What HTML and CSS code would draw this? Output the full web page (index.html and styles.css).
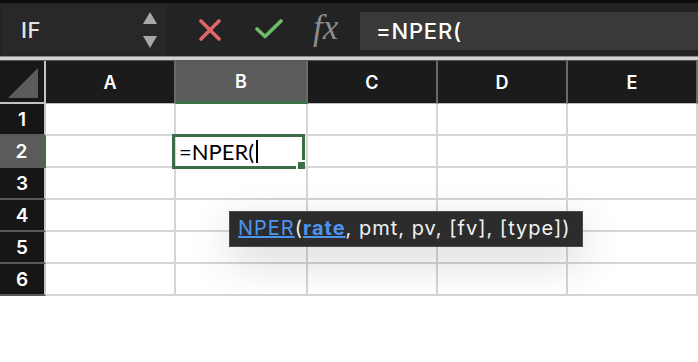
FILE: index.html
```html
<!DOCTYPE html>
<html lang="en">
<head>
  <meta charset="UTF-8">
  <title>NPER</title>
  <link rel="stylesheet" href="styles.css">
</head>
<body>
  <div class="toolbar">
    <div class="namebox">
      <span class="name">IF</span>
      <div class="spin">
        <svg width="14" height="12" viewBox="0 0 14 12"><polygon points="7,0 14,12 0,12" fill="#a9a9a9"/></svg>
        <svg width="14" height="12" viewBox="0 0 14 12"><polygon points="0,0 14,0 7,12" fill="#a9a9a9"/></svg>
      </div>
    </div>
    <div class="actions">
      <svg class="cancel" width="22" height="22" viewBox="0 0 22 22"><path d="M2 2 L20 20 M20 2 L2 20" stroke="#e06767" stroke-width="3.6" stroke-linecap="round"/></svg>
      <svg class="enter" width="28" height="20" viewBox="0 0 28 20"><path d="M2 10 L10 17.5 L26 2" fill="none" stroke="#6bbb69" stroke-width="3.6" stroke-linecap="round" stroke-linejoin="round"/></svg>
      <span class="fx">fx</span>
    </div>
    <div class="formula">=NPER(</div>
  </div>
  <div class="divider"></div>

  <div class="sheet">
    <div class="corner"><svg width="30" height="30" viewBox="0 0 30 30"><polygon points="30,0 30,30 0,30" fill="#5c5c5c"/></svg></div>
    <div class="colhead">A</div>
    <div class="colhead active">B</div>
    <div class="colhead">C</div>
    <div class="colhead">D</div>
    <div class="colhead">E</div>

    <div class="rowhead">1</div>
    <div class="cell"></div><div class="cell"></div><div class="cell"></div><div class="cell"></div><div class="cell"></div>

    <div class="rowhead active">2</div>
    <div class="cell"></div>
    <div class="cell editing">=NPER(<span class="caret"></span><div class="sel"><div class="handle"></div></div></div>
    <div class="cell"></div><div class="cell"></div><div class="cell"></div>

    <div class="rowhead">3</div>
    <div class="cell"></div><div class="cell"></div><div class="cell"></div><div class="cell"></div><div class="cell"></div>

    <div class="rowhead">4</div>
    <div class="cell"></div><div class="cell"></div><div class="cell"></div><div class="cell"></div><div class="cell"></div>

    <div class="rowhead">5</div>
    <div class="cell"></div><div class="cell"></div><div class="cell"></div><div class="cell"></div><div class="cell"></div>

    <div class="rowhead">6</div>
    <div class="cell"></div><div class="cell"></div><div class="cell"></div><div class="cell"></div><div class="cell"></div>

    <div class="tip"><span class="fn">NPER</span>(<span class="arg">rate</span>, pmt, pv, [fv], [type])</div>
  </div>
</body>
</html>
```

FILE: styles.css
```css
body { margin: 0; background: #fff; font-family: Inter, "Open Sans", sans-serif; }

.toolbar { display: flex; height: 53px; border-top: 3px solid #0c0c0c; background: #232323; }
.namebox { display: flex; align-items: center; justify-content: space-between; width: 165px; margin: 2px 5px 1px 2px; padding: 0 10px 0 19px; box-sizing: border-box; background: #282828; }
.name { color: #e4e4e4; font-size: 22px; font-weight: 500; letter-spacing: 0.5px; }
.spin { display: flex; flex-direction: column; gap: 12px; }
.actions { display: flex; align-items: center; width: 188px; padding-left: 27px; box-sizing: border-box; }
.enter { margin-left: 34px; margin-top: -2px; }
.fx { margin-left: 30px; color: #8c8c8c; font-family: "Liberation Serif", serif; font-style: italic; font-size: 35px; margin-top: -4px; }
.formula { flex: 1; margin: 9px 0 6px; padding-left: 16px; background: #393939; color: #fff; font-size: 22px; font-weight: 500; line-height: 38px; letter-spacing: 0.8px; }

.divider { height: 3px; background: #d2d2d2; border-top: 1px solid #8a8a8a; border-bottom: 1px solid #555; }

.sheet { position: relative; display: grid; grid-template-columns: 46px 130px 132px 130px 130px 130px; grid-template-rows: 43px repeat(6, 32px); }
.sheet > div { box-sizing: border-box; }
.corner { display: flex; align-items: flex-end; justify-content: flex-end; padding: 0 6px 4px 0; background: #181818; border-right: 2px solid #c4c4c4; border-bottom: 2px solid #c4c4c4; }
.colhead { display: flex; align-items: center; justify-content: center; background: #1b1b1b; color: #fff; font-size: 18px; font-weight: 600; border-right: 2px solid #6a6a6a; border-bottom: 1px solid #bdbdbd; }
.colhead.active { background: #5b5b5b; border-bottom: 3px solid #3d6f48; }
.rowhead { display: flex; align-items: center; justify-content: center; background: #161616; color: #fff; font-size: 19px; font-weight: 600; border-right: 2px solid #c4c4c4; border-bottom: 2px solid #5a5a5a; }
.rowhead.active { background: #5b5b5b; border-right: 3px solid #3d6f48; }
.cell { background: #fff; border-right: 2px solid #d6d6d6; border-bottom: 2px solid #d6d6d6; }

.editing { position: relative; display: flex; align-items: center; padding-left: 3px; font-family: Lato, sans-serif; font-size: 22px; color: #000; }
.caret { display: inline-block; width: 2px; height: 23px; margin-left: 2px; background: #000; }
.sel { position: absolute; top: -2px; left: -4px; right: 1px; bottom: -3px; border: 3px solid #3b6e46; }
.handle { position: absolute; right: -3px; bottom: -3px; width: 7px; height: 7px; background: #3b6e46; border-left: 2px solid #fff; border-top: 2px solid #fff; }

.tip { position: absolute; left: 229px; top: 150px; width: 354px; height: 36px; box-sizing: border-box; padding-left: 8px; background: #2c2c2c; border: 1px solid #4a4a4a; color: #f2f2f2; font-size: 20px; letter-spacing: 1px; line-height: 33px; white-space: nowrap; box-shadow: 0 14px 44px rgba(0, 0, 0, 0.16); }
.fn { color: #4d94f0; text-decoration: underline; }
.arg { color: #4d94f0; font-weight: 700; text-decoration: underline; }
```
